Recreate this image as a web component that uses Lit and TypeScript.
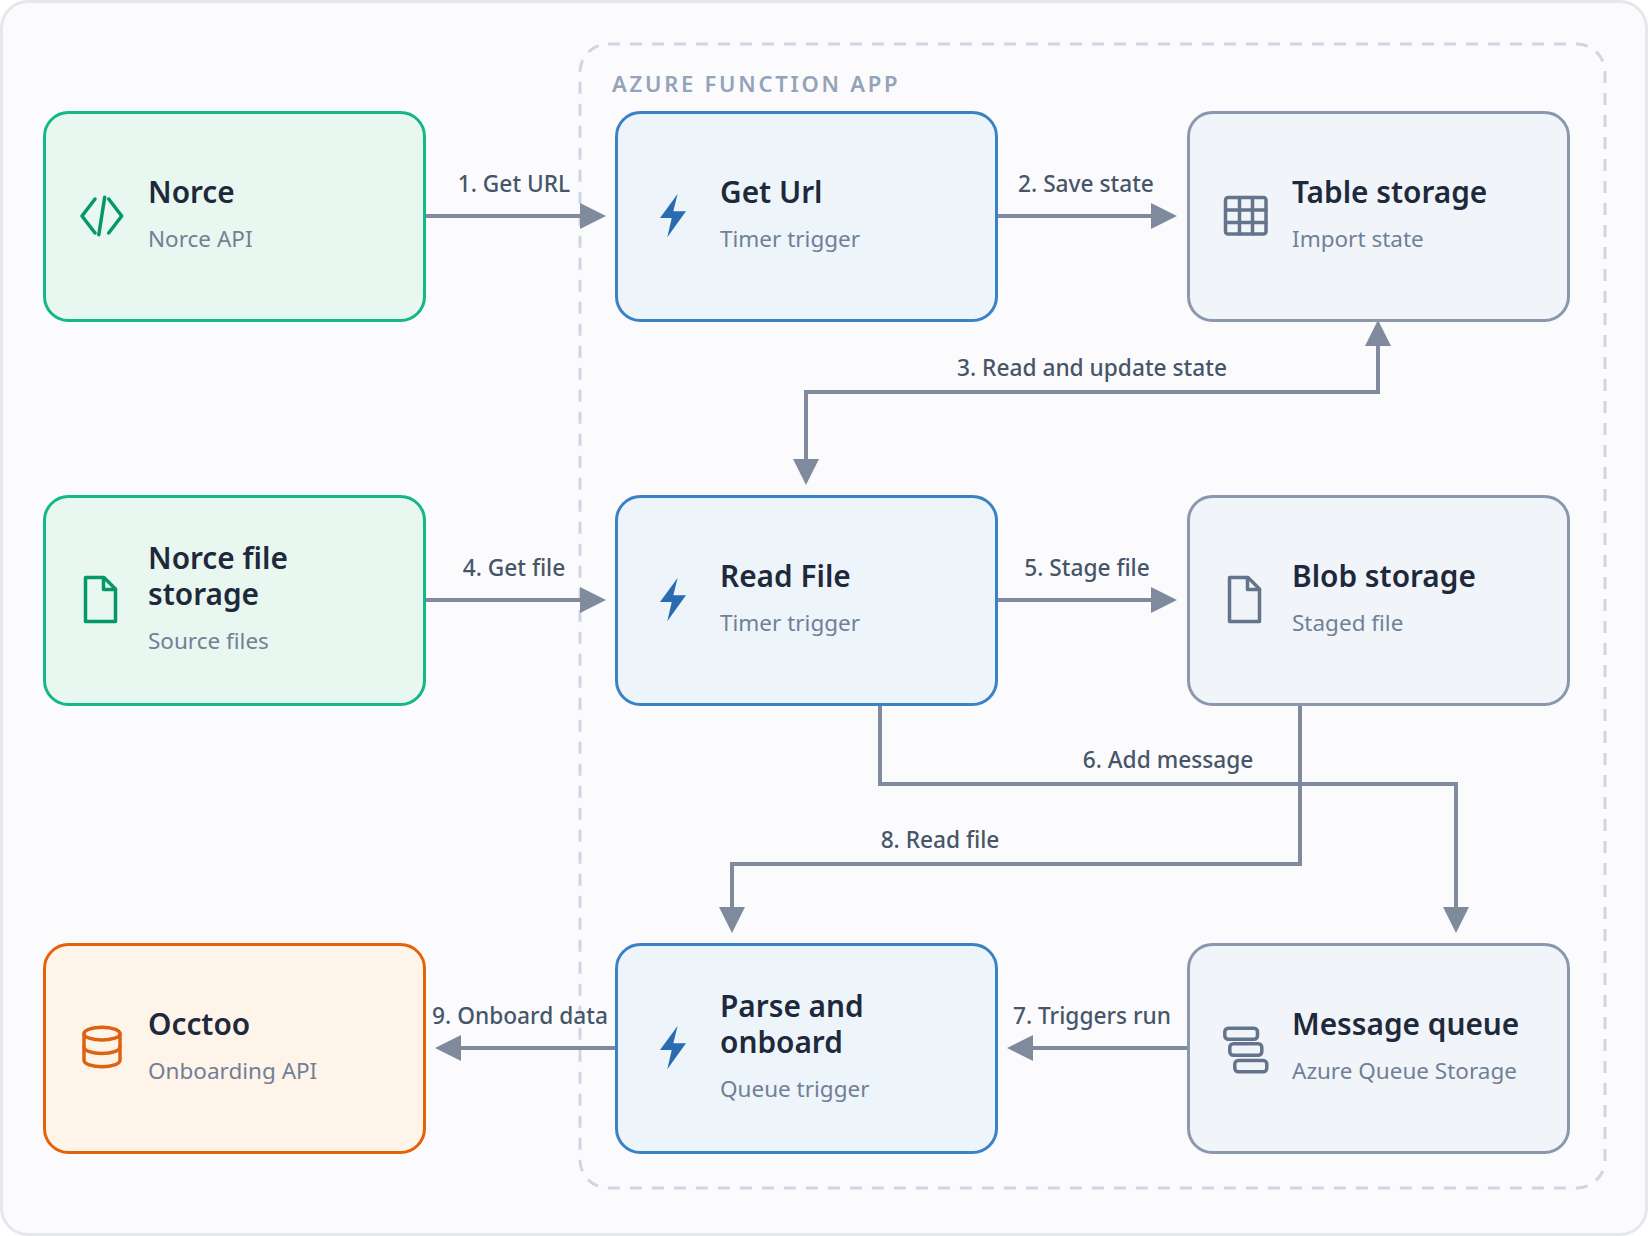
import { LitElement, css, html, svg } from "lit";
import { customElement } from "lit/decorators.js";

type Kind = "green" | "blue" | "slate" | "orange";
type IconName = "code" | "file" | "bolt" | "table" | "queue" | "db";

interface DiagramNode {
  x: number;
  y: number;
  kind: Kind;
  icon: IconName;
  title: string;
  sub: string;
}

const nodes: DiagramNode[] = [
  { x: 44, y: 112, kind: "green", icon: "code", title: "Norce", sub: "Norce API" },
  { x: 616, y: 112, kind: "blue", icon: "bolt", title: "Get Url", sub: "Timer trigger" },
  { x: 1188, y: 112, kind: "slate", icon: "table", title: "Table storage", sub: "Import state" },
  { x: 44, y: 496, kind: "green", icon: "file", title: "Norce file storage", sub: "Source files" },
  { x: 616, y: 496, kind: "blue", icon: "bolt", title: "Read File", sub: "Timer trigger" },
  { x: 1188, y: 496, kind: "slate", icon: "file", title: "Blob storage", sub: "Staged file" },
  { x: 44, y: 944, kind: "orange", icon: "db", title: "Occtoo", sub: "Onboarding API" },
  { x: 616, y: 944, kind: "blue", icon: "bolt", title: "Parse and onboard", sub: "Queue trigger" },
  { x: 1188, y: 944, kind: "slate", icon: "queue", title: "Message queue", sub: "Azure Queue Storage" },
];

// polylines, arrowhead tips are added from the direction of the first/last segment
const edges: { pts: number[][]; start?: boolean; end?: boolean }[] = [
  { pts: [[424, 216], [606, 216]], end: true },
  { pts: [[996, 216], [1177, 216]], end: true },
  { pts: [[806, 485], [806, 392], [1378, 392], [1378, 320]], start: true, end: true },
  { pts: [[424, 600], [606, 600]], end: true },
  { pts: [[996, 600], [1177, 600]], end: true },
  { pts: [[880, 704], [880, 784], [1456, 784], [1456, 933]], end: true },
  { pts: [[1300, 704], [1300, 864], [732, 864], [732, 933]], end: true },
  { pts: [[1188, 1048], [1007, 1048]], end: true },
  { pts: [[616, 1048], [435, 1048]], end: true },
];

const labels: { x: number; y: number; text: string }[] = [
  { x: 514, y: 192, text: "1. Get URL" },
  { x: 1086, y: 192, text: "2. Save state" },
  { x: 1092, y: 376, text: "3. Read and update state" },
  { x: 514, y: 576, text: "4. Get file" },
  { x: 1087, y: 576, text: "5. Stage file" },
  { x: 1168, y: 768, text: "6. Add message" },
  { x: 1092, y: 1024, text: "7. Triggers run" },
  { x: 940, y: 848, text: "8. Read file" },
  { x: 520, y: 1024, text: "9. Onboard data" },
];

function head(tip: number[], from: number[]) {
  const len = 26;
  const half = 13;
  const dx = Math.sign(tip[0] - from[0]);
  const dy = Math.sign(tip[1] - from[1]);
  const bx = tip[0] - dx * len;
  const by = tip[1] - dy * len;
  const p = [tip, [bx - dy * half, by - dx * half], [bx + dy * half, by + dx * half]];
  return svg`<polygon class="head" points=${p.map((q) => q.join(",")).join(" ")}></polygon>`;
}

// shorten the line a little so its square end stays inside the arrowhead
function inset(pts: number[][], start?: boolean, end?: boolean) {
  const out = pts.map((p) => [...p]);
  const pull = (a: number[], b: number[]) => {
    a[0] += Math.sign(b[0] - a[0]) * 12;
    a[1] += Math.sign(b[1] - a[1]) * 12;
  };
  if (start) pull(out[0], out[1]);
  if (end) pull(out[out.length - 1], out[out.length - 2]);
  return out.map((p) => p.join(",")).join(" ");
}

const icons: Record<IconName, unknown> = {
  code: svg`
    <path d="M17 7 4 24l13 17"></path>
    <path d="M30.7 7l13 17-13 17"></path>
    <path d="M26.7 5.3 20.8 42.7"></path>`,
  file: svg`
    <path d="M7.5 1.5H26L37.5 13V45.5H7.5Z"></path>
    <path d="M25.5 1.5V13.5H37.5"></path>`,
  bolt: svg`<path class="solid" d="M27.7 1.7 10 26H21.7L17.3 45.3 36 19.3H23.3Z"></path>`,
  table: svg`
    <rect x="3.5" y="5.5" width="40.5" height="36.5" rx="2.5"></rect>
    <path d="M17.5 5.5V42M30.5 5.5V42M3.5 18H44M3.5 30.5H44"></path>`,
  queue: svg`
    <rect x="2.8" y="4.2" width="32.7" height="11" rx="3.5"></rect>
    <rect x="7.8" y="19.8" width="32" height="11.4" rx="3.5"></rect>
    <rect x="12.8" y="36.5" width="32" height="11.3" rx="3.5"></rect>`,
  db: svg`
    <ellipse cx="24" cy="9.7" rx="18" ry="6.4"></ellipse>
    <path d="M6 9.7V36.3A18 6.4 0 0 0 42 36.3V9.7"></path>
    <path d="M6 23A18 6.4 0 0 0 42 23"></path>`,
};

@customElement("app-root")
export class AppRoot extends LitElement {
  static override styles = css`
    :host {
      display: block;
      width: 1648px;
      height: 1236px;
      font-family: "Noto Sans", "Open Sans", sans-serif;
    }

    .canvas {
      position: relative;
      width: 100%;
      height: 100%;
      box-sizing: border-box;
      background: #fbfbfd;
      border: 3px solid #e5e7eb;
      border-radius: 28px;
      overflow: hidden;
    }

    .wires {
      position: absolute;
      left: -3px;
      top: -3px;
      width: 1648px;
      height: 1236px;
    }

    .group {
      fill: none;
      stroke: #cdd7e3;
      stroke-width: 3;
      stroke-dasharray: 12 10;
    }

    .group-title {
      font-size: 22px;
      font-weight: 600;
      letter-spacing: 2.75px;
      fill: #94a3b8;
    }

    .line {
      fill: none;
      stroke: #7f8a9c;
      stroke-width: 4;
    }

    .head {
      fill: #7f8a9c;
    }

    .edge-label {
      font-size: 22.7px;
      font-weight: 500;
      fill: #475569;
      text-anchor: middle;
    }

    .node {
      position: absolute;
      width: 383px;
      height: 211px;
      margin: -4.5px 0 0 -4.5px;
      box-sizing: border-box;
      display: flex;
      align-items: center;
      gap: 22px;
      padding: 0 32.5px;
      border: 3px solid;
      border-radius: 25.5px;
    }

    .green {
      background: #e8f7ef;
      border-color: #14b886;
      color: #059669;
    }

    .blue {
      background: #edf5fb;
      border-color: #3b82c4;
      color: #2b6cb0;
    }

    .slate {
      background: #f1f5f9;
      border-color: #8a97ad;
      color: #64748b;
    }

    .orange {
      background: #fff4ea;
      border-color: #e5620a;
      color: #dd6310;
    }

    .icon {
      flex: none;
      width: 48px;
      height: 48px;
      overflow: visible;
      fill: none;
      stroke: currentColor;
      stroke-width: 3.5;
      stroke-linejoin: round;
      stroke-linecap: round;
    }

    .icon .solid {
      fill: currentColor;
      stroke: none;
    }

    .text {
      padding-bottom: 5px;
    }

    .title {
      font-size: 29.8px;
      font-weight: 600;
      line-height: 36px;
      color: #1e293b;
    }

    .sub {
      margin-top: 14px;
      font-size: 22.5px;
      line-height: 29px;
      color: #718096;
    }
  `;

  override render() {
    return html`
      <div class="canvas">
        <svg class="wires" viewBox="0 0 1648 1236">
          <rect class="group" x="580" y="44" width="1025" height="1144" rx="28"></rect>
          <text class="group-title" x="612" y="92">AZURE FUNCTION APP</text>
          ${edges.map(
            (e) => svg`
              <polyline class="line" points=${inset(e.pts, e.start, e.end)}></polyline>
              ${e.start ? head(e.pts[0], e.pts[1]) : ""}
              ${e.end ? head(e.pts[e.pts.length - 1], e.pts[e.pts.length - 2]) : ""}`
          )}
          ${labels.map(
            (l) => svg`<text class="edge-label" x=${l.x} y=${l.y}>${l.text}</text>`
          )}
        </svg>
        ${nodes.map(
          (n) => html`
            <div class="node ${n.kind}" style="left:${n.x}px;top:${n.y}px">
              <svg class="icon" viewBox="0 0 48 48">${icons[n.icon]}</svg>
              <div class="text">
                <div class="title">${n.title}</div>
                <div class="sub">${n.sub}</div>
              </div>
            </div>
          `
        )}
      </div>
    `;
  }
}
